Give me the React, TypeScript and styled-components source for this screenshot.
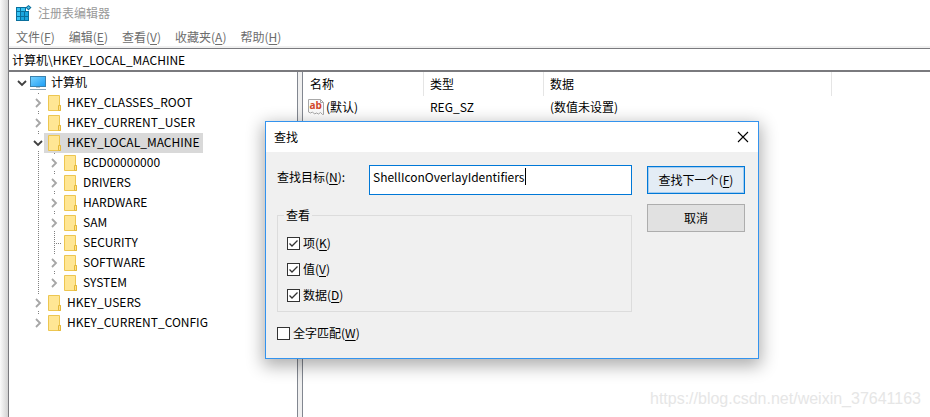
import React from "react";
import styled, { createGlobalStyle } from "styled-components";

const dots = "#808080";

const GlobalStyle = createGlobalStyle`
  *, *::before, *::after { box-sizing: border-box; }
  body {
    margin: 0;
    overflow: hidden;
    background: #fff;
    color: #000;
  }
  body, button, input {
    font-family: "Noto Sans CJK SC", "Noto Sans", sans-serif;
    font-size: 12px;
    line-height: 20px;
  }
  u { text-underline-offset: 2px; }
`;

const Desktop = styled.div`
  position: relative;
  display: flex;
  min-height: 100vh;
  padding-left: 8px;
  background: linear-gradient(to right, #fafafa, #d2d2d2 8px);
`;

const Window = styled.main`
  flex: 1;
  min-width: 0;
  display: flex;
  flex-direction: column;
  background: #fff;
  border-left: 1px solid #7a7a7e;
`;

const TitleBar = styled.header`
  display: flex;
  align-items: center;
  gap: 6px;
  height: 26px;
  padding-left: 7px;
  color: #999;
`;

const WindowTitle = styled.h1`
  margin: 0;
  font-size: 12px;
  font-weight: 400;
`;

const MenuBar = styled.nav`
  display: flex;
  gap: 14px;
  height: 22px;
  padding: 2px 7px 0;
  border-bottom: 2px solid #f0f0f0;
`;

const MenuButton = styled.button`
  height: 18px;
  padding: 0;
  border: 0;
  background: none;
  color: #6d6d6d;
  line-height: 18px;
`;

const AddressInput = styled.input`
  width: 100%;
  height: 24px;
  padding: 0 3px;
  border: solid #7a7a7e;
  border-width: 1px 0 2px;
  background: #fff;
  outline: 0;
`;

const Panes = styled.div`
  flex: 1;
  display: grid;
  grid-template-columns: 289px 1fr;
  column-gap: 4px;
  background: #f0f0f0;
`;

const TreePane = styled.section`
  background: #fff;
  border-right: 1px solid #828790;
`;

const ListPane = styled.section`
  min-width: 0;
  background: #fff;
  border-left: 1px solid #828790;
`;

const Tree = styled.ul`
  margin: 0;
  padding: 1px 0 0 5px;
  list-style: none;
`;

const TreeRow = styled.li`
  display: flex;
  height: 20px;
`;

const Guide = styled.span<{ $line: "none" | "full" | "top" }>`
  display: flex;
  align-items: center;
  justify-content: center;
  width: 16px;
  height: 20px;
  background-image: ${(p) =>
    p.$line === "none" ? "none" : `repeating-linear-gradient(${dots} 0 1px, transparent 1px 2px)`};
  background-size: 1px ${(p) => (p.$line === "full" ? "20px" : "10px")};
  background-position: 8px 0;
  background-repeat: no-repeat;
`;

const Toggle = styled.button`
  display: flex;
  align-items: center;
  justify-content: center;
  width: 14px;
  height: 16px;
  padding: 0;
  border: 0;
  background: #fff;
`;

const Branch = styled.span`
  width: 7px;
  height: 1px;
  margin-left: 9px;
  background: repeating-linear-gradient(to right, transparent 0 1px, ${dots} 1px 2px);
`;

const Node = styled.span<{ $selected?: boolean; $root?: boolean }>`
  display: flex;
  align-items: center;
  gap: ${(p) => (p.$root ? 5 : 6)}px;
  height: 20px;
  margin-left: ${(p) => (p.$root ? 0 : -2)}px;
  padding: 0 4px 0 ${(p) => (p.$root ? 0 : 4)}px;
  background: ${(p) => (p.$selected ? "#d9d9d9" : "transparent")};
`;

const NodeLabel = styled.span`
  line-height: 18px;
  padding-bottom: 2px;
`;

const ValueTable = styled.table`
  width: 529px;
  table-layout: fixed;
  border-collapse: separate;
  border-spacing: 0;
  text-align: left;

  th, td { padding: 0 7px 0 6px; font-weight: 400; }
  th { height: 24px; border-right: 1px solid #e5e5e5; }
  th:first-child { padding-left: 7px; }
  td { height: 22px; }
  td:first-child { padding-left: 5px; }
`;

const Column = styled.col<{ $width: number }>`
  width: ${(p) => p.$width}px;
`;

const ValueName = styled.span`
  display: flex;
  align-items: center;
  gap: 2px;
`;

const Dialog = styled.section`
  position: absolute;
  top: 121px;
  left: 265px;
  width: 494px;
  border: 1px solid #3393ee;
  background: #f0f0f0;
  box-shadow: 0 5px 16px 2px rgba(0, 0, 0, 0.32);
`;

const DialogTitle = styled.header`
  display: flex;
  align-items: center;
  justify-content: space-between;
  height: 30px;
  padding: 0 9px 0 8px;
  background: #fff;
`;

const CloseButton = styled.button`
  display: flex;
  padding: 0;
  border: 0;
  background: none;
`;

const DialogBody = styled.form`
  display: grid;
  grid-template-columns: 1fr 98px;
  column-gap: 15px;
  padding: 13px 13px 15px 11px;
`;

const SearchRow = styled.div`
  display: grid;
  grid-template-columns: 92px 1fr;
  height: 30px;
`;

const SearchLabel = styled.label`
  padding-top: 2px;
`;

const SearchBox = styled.div`
  display: flex;
  padding: 2px 3px;
  border: 1px solid #0078d7;
  background: #fff;
`;

const SearchInput = styled.input`
  field-sizing: content;
  height: 18px;
  padding: 0;
  border: 0;
  outline: 0;
  background: none;
  line-height: 18px;
`;

const Caret = styled.span`
  width: 1px;
  height: 17px;
  background: #000;
`;

const Group = styled.fieldset`
  display: flex;
  flex-direction: column;
  gap: 6px;
  min-width: 0;
  margin: 10px 0 11px;
  padding: 8px 9px 6px;
  border: 1px solid #dcdcdc;

  legend { padding: 0 2px; margin-left: -3px; }
`;

const CheckLabel = styled.label`
  display: flex;
  align-items: center;
  gap: 3px;
  height: 20px;
`;

const CheckBox = styled.span`
  display: grid;

  > * { grid-area: 1 / 1; }
  input {
    width: 13px;
    height: 13px;
    margin: 0;
    appearance: none;
    border: 1px solid #333;
    background: #fff;
  }
  svg { pointer-events: none; }
  input:not(:checked) + svg { visibility: hidden; }
`;

const Actions = styled.div`
  display: flex;
  flex-direction: column;
  gap: 10px;
  padding-top: 1px;
`;

const ActionButton = styled.button<{ $primary?: boolean }>`
  height: 28px;
  padding: 0;
  border: 1px solid ${(p) => (p.$primary ? "#0078d7" : "#adadad")};
  background: ${(p) => (p.$primary ? "#e3ecf5" : "#e1e1e1")};
  box-shadow: ${(p) => (p.$primary ? "inset 0 0 0 1px #a5cdf0" : "none")};
  line-height: 18px;
`;

const Watermark = styled.span`
  position: absolute;
  right: 9px;
  bottom: 8px;
  color: #e6e6e6;
  font: 16px/20px "Liberation Sans", sans-serif;
`;

const RegistryIcon = () => (
  <svg width="16" height="16" viewBox="0 0 16 16" aria-hidden="true">
    <path d="M0 2h10v4h3v10H0z" fill="#0a6f9c" />
    <path d="M1 3h3v3H1zM5 3h4v3H5zM1 7h3v4H1zM1 12h3v3H1z" fill="#35c2f2" />
    <path d="M5 7h3v4H5zM9 7h3v4H9zM5 12h3v3H5zM9 12h3v3H9z" fill="#1aa5de" />
    <path d="M12.500 0l3 2.500-3 3-3-3z" fill="#0a6f9c" />
    <path d="M12.500 1.300l1.500 1.200-1.500 1.500-1.500-1.500z" fill="#4fc3ec" />
  </svg>
);

const ComputerIcon = () => (
  <svg width="16" height="16" viewBox="0 0 16 16" aria-hidden="true">
    <defs>
      <linearGradient id="screen" x1="0" y1="0" x2="1" y2="1">
        <stop offset="0" stopColor="#79d3ff" />
        <stop offset="1" stopColor="#1b9df5" />
      </linearGradient>
    </defs>
    <rect x="0.500" y="1.500" width="15" height="10" fill="url(#screen)" stroke="#3b82ae" />
    <path d="M6 12h4v1H6z" fill="#b6c5ce" />
    <path d="M0 14h16v1H0z" fill="#8ba4b5" />
  </svg>
);

const FolderIcon = () => (
  <svg width="13" height="16" viewBox="0 0 13 16" aria-hidden="true">
    <path d="M.5.5h11v10h1v5H.5z" fill="#ffe694" stroke="#edc651" />
    <path d="M10.500 15.500v-5h2v5z" fill="#ffe08a" stroke="#e5b93a" />
  </svg>
);

const Chevron = ({ open }: { open?: boolean }) => (
  <svg width="10" height="10" viewBox="0 0 10 10" fill="none" strokeWidth="1.800" aria-hidden="true">
    <path d={open ? "M1 3l4 4 4-4" : "M3 1l4 4-4 4"} stroke={open ? "#404040" : "#a6a6a6"} />
  </svg>
);

const StringIcon = () => (
  <svg width="16" height="16" viewBox="0 0 16 16" aria-hidden="true">
    <path
      d="M.5.5h12l3 3v12h-1l-2-2-2 1.500-2-1-2 1-2-2-2 1-2-1z"
      fill="#fbfbfb"
      stroke="#a8a8a8"
    />
    <path d="M12.500.5v3h3" fill="none" stroke="#a8a8a8" />
    <text x="1.500" y="10" fill="#d2472a" fontFamily="Open Sans, sans-serif" fontSize="10" fontWeight="700">
      ab
    </text>
  </svg>
);

const CloseIcon = () => (
  <svg width="12" height="12" viewBox="0 0 12 12" aria-hidden="true">
    <path d="M1 1l10 10M11 1L1 11" stroke="#000" strokeWidth="1.100" />
  </svg>
);

const Tick = () => (
  <svg width="13" height="13" viewBox="0 0 13 13" aria-hidden="true">
    <path d="M2.500 6.500l2.500 2.500 5.500-5.500" fill="none" stroke="#333" strokeWidth="1.300" />
  </svg>
);

type Key = { name: string; depth: 1 | 2; open?: boolean; leaf?: boolean; last?: boolean };

const keys: Key[] = [
  { name: "HKEY_CLASSES_ROOT", depth: 1 },
  { name: "HKEY_CURRENT_USER", depth: 1 },
  { name: "HKEY_LOCAL_MACHINE", depth: 1, open: true },
  { name: "BCD00000000", depth: 2 },
  { name: "DRIVERS", depth: 2 },
  { name: "HARDWARE", depth: 2 },
  { name: "SAM", depth: 2 },
  { name: "SECURITY", depth: 2, leaf: true },
  { name: "SOFTWARE", depth: 2 },
  { name: "SYSTEM", depth: 2, last: true },
  { name: "HKEY_USERS", depth: 1 },
  { name: "HKEY_CURRENT_CONFIG", depth: 1, last: true },
];

const menus = [
  ["文件", "F"],
  ["编辑", "E"],
  ["查看", "V"],
  ["收藏夹", "A"],
  ["帮助", "H"],
];

const Mnemonic = ({ text, letter }: { text: string; letter: string }) => (
  <span>
    {text}(<u>{letter}</u>)
  </span>
);

const Check = ({ text, letter, checked }: { text: string; letter: string; checked?: boolean }) => (
  <CheckLabel>
    <CheckBox>
      <input type="checkbox" defaultChecked={checked} />
      <Tick />
    </CheckBox>
    <Mnemonic text={text} letter={letter} />
  </CheckLabel>
);

const KeyRow = ({ item }: { item: Key }) => (
  <TreeRow>
    <Guide $line="none" />
    {item.depth === 2 && <Guide $line="full" />}
    <Guide $line={item.last ? "top" : "full"}>
      {item.leaf ? (
        <Branch />
      ) : (
        <Toggle type="button" aria-label={item.name} aria-expanded={!!item.open}>
          <Chevron open={item.open} />
        </Toggle>
      )}
    </Guide>
    <Node $selected={item.open}>
      <FolderIcon />
      <NodeLabel>{item.name}</NodeLabel>
    </Node>
  </TreeRow>
);

export default function App() {
  return (
    <>
      <GlobalStyle />
      <Desktop>
        <Window>
          <TitleBar>
            <RegistryIcon />
            <WindowTitle>注册表编辑器</WindowTitle>
          </TitleBar>
          <MenuBar>
            {menus.map(([text, letter]) => (
              <MenuButton key={letter} type="button">
                <Mnemonic text={text} letter={letter} />
              </MenuButton>
            ))}
          </MenuBar>
          <AddressInput aria-label="地址" defaultValue="计算机\HKEY_LOCAL_MACHINE" />
          <Panes>
            <TreePane>
              <Tree>
                <TreeRow>
                  <Guide $line="none">
                    <Toggle type="button" aria-label="计算机" aria-expanded>
                      <Chevron open />
                    </Toggle>
                  </Guide>
                  <Node $root>
                    <ComputerIcon />
                    <NodeLabel>计算机</NodeLabel>
                  </Node>
                </TreeRow>
                {keys.map((item) => (
                  <KeyRow key={item.name} item={item} />
                ))}
              </Tree>
            </TreePane>
            <ListPane>
              <ValueTable>
                <colgroup>
                  <Column $width={121} />
                  <Column $width={120} />
                  <Column $width={288} />
                </colgroup>
                <thead>
                  <tr>
                    <th>名称</th>
                    <th>类型</th>
                    <th>数据</th>
                  </tr>
                </thead>
                <tbody>
                  <tr>
                    <td>
                      <ValueName>
                        <StringIcon />
                        (默认)
                      </ValueName>
                    </td>
                    <td>REG_SZ</td>
                    <td>(数值未设置)</td>
                  </tr>
                </tbody>
              </ValueTable>
            </ListPane>
          </Panes>
        </Window>
        <Watermark>https://blog.csdn.net/weixin_37641163</Watermark>
        <Dialog role="dialog" aria-labelledby="find-title">
          <DialogTitle>
            <span id="find-title">查找</span>
            <CloseButton type="button" aria-label="关闭">
              <CloseIcon />
            </CloseButton>
          </DialogTitle>
          <DialogBody onSubmit={(e) => e.preventDefault()}>
            <div>
              <SearchRow>
                <SearchLabel htmlFor="target">
                  <Mnemonic text="查找目标" letter="N" />:
                </SearchLabel>
                <SearchBox>
                  <SearchInput id="target" defaultValue="ShellIconOverlayIdentifiers" />
                  <Caret />
                </SearchBox>
              </SearchRow>
              <Group>
                <legend>查看</legend>
                <Check text="项" letter="K" checked />
                <Check text="值" letter="V" checked />
                <Check text="数据" letter="D" checked />
              </Group>
              <Check text="全字匹配" letter="W" />
            </div>
            <Actions>
              <ActionButton type="submit" $primary>
                <Mnemonic text="查找下一个" letter="F" />
              </ActionButton>
              <ActionButton type="button">取消</ActionButton>
            </Actions>
          </DialogBody>
        </Dialog>
      </Desktop>
    </>
  );
}
